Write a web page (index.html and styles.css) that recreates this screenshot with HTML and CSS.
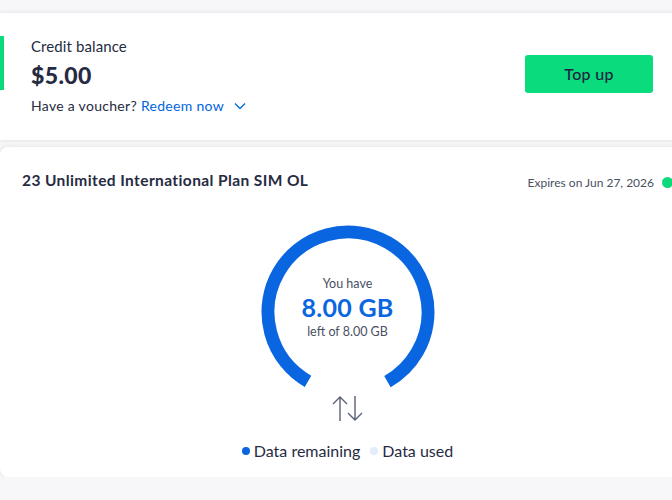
FILE: index.html
```html
<!DOCTYPE html>
<html lang="en">
<head>
  <meta charset="UTF-8">
  <title>My account</title>
  <link rel="stylesheet" href="styles.css">
</head>
<body>

  <div class="page">
    <div class="card balance-card">
      <div class="balance-info">
        <div class="balance-label">Credit balance</div>
        <div class="balance-amount">$5.00</div>
        <div class="voucher">
          Have a voucher?
          <a href="#" class="redeem">Redeem now
            <svg class="chevron" width="12" height="8" viewBox="0 0 12 8">
              <path d="M1 1.5 L6 6.5 L11 1.5" fill="none" stroke="#0066e0" stroke-width="1.3"/>
            </svg>
          </a>
        </div>
      </div>
      <button class="topup">Top up</button>
    </div>

    <div class="card plan-card">
      <div class="plan-header">
        <h2 class="plan-name">23 Unlimited International Plan SIM OL</h2>
        <div class="plan-expiry">
          Expires on Jun 27, 2026
          <span class="status-dot"></span>
        </div>
      </div>

      <div class="gauge">
        <svg class="gauge-ring" width="176" height="176" viewBox="0 0 176 176">
          <!-- 300 degree arc, gap at the bottom -->
          <circle cx="88" cy="88" r="80" fill="none" stroke="#0a66e0" stroke-width="13"
                  stroke-dasharray="418.9 502.7" transform="rotate(120 88 88)"/>
        </svg>
        <div class="gauge-text">
          <div class="gauge-small">You have</div>
          <div class="gauge-value">8.00 GB</div>
          <div class="gauge-small">left of 8.00 GB</div>
        </div>
      </div>

      <svg class="transfer-icon" width="31" height="27" viewBox="0 0 31 27">
        <path d="M8 26 V2 M1 9 L8 2 L15 9" fill="none" stroke="#5b6178" stroke-width="1.4"/>
        <path d="M23 1 V25 M16 18 L23 25 L30 18" fill="none" stroke="#5b6178" stroke-width="1.4"/>
      </svg>

      <div class="legend">
        <span class="legend-item"><span class="legend-dot remaining"></span>Data remaining</span>
        <span class="legend-item"><span class="legend-dot used"></span>Data used</span>
      </div>
    </div>
  </div>

</body>
</html>
```

FILE: styles.css
```css
body {
  margin: 0;
  background-color: #f7f7f9;
  color: #262b42;
  font-family: Lato, "Open Sans", sans-serif;
  overflow: hidden;
}

.page {
  width: 695px;
  padding-top: 13px;
  display: flex;
  flex-direction: column;
  gap: 7px;
}

.card {
  background-color: #fff;
  box-shadow: 0 0 4px rgba(30, 35, 60, 0.12);
}

/* credit balance */
.balance-card {
  height: 127px;
  display: flex;
  align-items: center;
  justify-content: space-between;
  padding: 0 42px 0 31px;
  position: relative;
  box-sizing: border-box;
}

.balance-card::before {
  content: "";
  position: absolute;
  left: 0;
  top: 23px;
  width: 4px;
  height: 54px;
  background-color: #0bd97c;
}

.balance-info {
  margin-top: -2px;
}

.balance-label {
  font-size: 15px;
  line-height: 20px;
  letter-spacing: 0.1px;
}

.balance-amount {
  font-size: 23px;
  font-weight: 900;
  line-height: 30px;
  margin-top: 4px;
  letter-spacing: 0.4px;
}

.voucher {
  font-size: 14px;
  line-height: 20px;
  margin-top: 6px;
  letter-spacing: 0.3px;
}

.redeem {
  color: #0066e0;
  text-decoration: none;
}

.chevron {
  margin-left: 6px;
  vertical-align: 1px;
}

.topup {
  width: 128px;
  height: 38px;
  margin-top: -6px;
  background-color: #0adb7c;
  color: #1f2240;
  border: none;
  border-radius: 3px;
  font-family: inherit;
  font-size: 16px;
  font-weight: 500;
  letter-spacing: 0.3px;
  cursor: pointer;
}

/* plan */
.plan-card {
  border-radius: 8px;
  height: 330px;
  padding: 23px 22px 0 22px;
  box-sizing: border-box;
  display: flex;
  flex-direction: column;
  align-items: center;
}

.plan-header {
  align-self: stretch;
  display: flex;
  justify-content: space-between;
  align-items: center;
}

.plan-name {
  margin: 0;
  font-size: 15.5px;
  font-weight: bold;
  line-height: 20px;
  letter-spacing: 0.4px;
}

.plan-expiry {
  font-size: 12px;
  color: #4a4f62;
  display: flex;
  align-items: center;
  gap: 8px;
  margin-top: 4px;
}

.status-dot {
  width: 11px;
  height: 11px;
  border-radius: 50%;
  background-color: #0bd97c;
}

.gauge {
  display: grid;
  margin-top: 34px;
}

.gauge-ring,
.gauge-text {
  grid-area: 1 / 1;
}

.gauge-text {
  align-self: center;
  text-align: center;
  margin-top: -10px;
}

.gauge-small {
  font-size: 12.5px;
  color: #4a4f62;
}

.gauge-value {
  font-size: 25px;
  font-weight: bold;
  color: #0a66e0;
  line-height: 30px;
  margin: 1px 0 2px;
  letter-spacing: 0.3px;
}

.transfer-icon {
  margin-top: -5px;
}

.legend {
  display: flex;
  gap: 10px;
  margin-top: 19px;
  font-size: 16px;
}

.legend-item {
  display: flex;
  align-items: center;
  gap: 4px;
}

.legend-dot {
  width: 8px;
  height: 8px;
  border-radius: 50%;
}

.legend-dot.remaining {
  background-color: #0a66e0;
}

.legend-dot.used {
  background-color: #e3ecf9;
}
```
